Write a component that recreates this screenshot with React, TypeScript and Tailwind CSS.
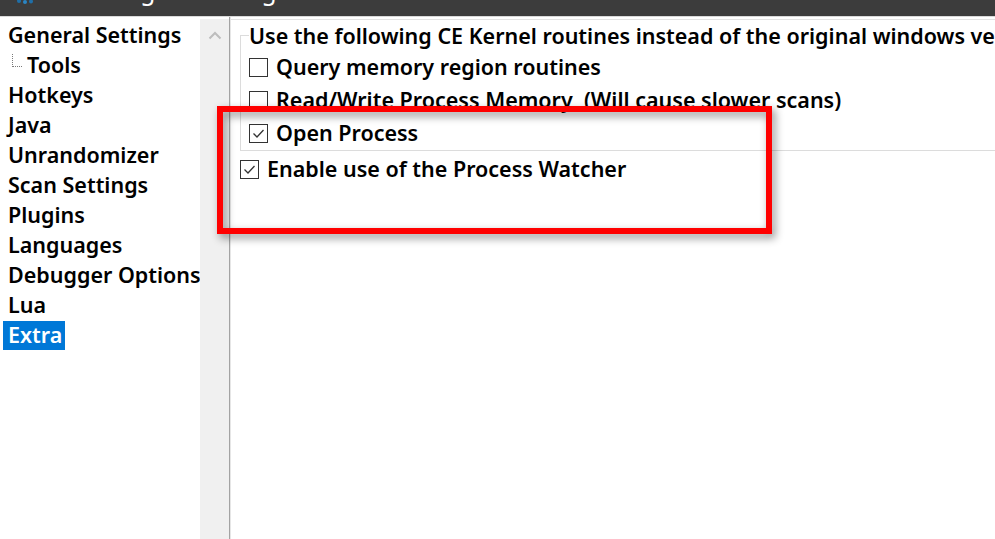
import React from 'react';

const TREE = [
  'General Settings',
  'Tools',
  'Hotkeys',
  'Java',
  'Unrandomizer',
  'Scan Settings',
  'Plugins',
  'Languages',
  'Debugger Options',
  'Lua',
  'Extra',
];

const KERNEL_OPTIONS = [
  { label: 'Query memory region routines', checked: false },
  { label: 'Read/Write Process Memory  (Will cause slower scans)', checked: false },
  { label: 'Open Process', checked: true },
];

function CheckBox({ checked }: { checked: boolean }) {
  return (
    <span className="flex h-[19px] w-[19px] shrink-0 items-center justify-center border border-[#333333] bg-white">
      {checked && (
        <svg width="13" height="11" viewBox="0 0 13 11">
          <path d="M1.5 5.5 L5 9 L11.5 2" fill="none" stroke="#333333" strokeWidth="1.3" />
        </svg>
      )}
    </span>
  );
}

function CheckRow({ label, checked }: { label: string; checked: boolean }) {
  return (
    <div className="flex h-[33px] items-center gap-[8px] whitespace-pre">
      <CheckBox checked={checked} />
      <span>{label}</span>
    </div>
  );
}

export default function App() {
  return (
    <div
      className="relative h-[539px] w-[995px] overflow-hidden bg-white text-[21.5px] font-semibold text-black"
      style={{ fontFamily: '"Noto Sans", "Open Sans", sans-serif' }}
    >
      {/* title bar, only the bottom edge is visible */}
      <div className="relative h-[16px] overflow-hidden bg-[#3c3c3c]">
        <svg className="absolute left-[15px] top-0" width="22" height="5" viewBox="0 0 22 5">
          <circle cx="4" cy="1" r="2" fill="#1f6fa8" />
          <circle cx="10" cy="2" r="2" fill="#2a86c4" />
          <circle cx="16" cy="1.5" r="2" fill="#1f6fa8" />
        </svg>
        <div className="absolute left-[38px] top-[-27px] whitespace-nowrap text-[24.5px] font-normal text-white">
          Cheat Engine settings
        </div>
      </div>

      <div className="flex h-[523px] border-t border-[#dadada]">
        {/* tree */}
        <div className="flex w-[231px] shrink-0">
          <div className="w-[200px] pt-[3px]">
            {TREE.map((item) => {
              if (item === 'Tools') {
                return (
                  <div key={item} className="flex h-[30px] items-center">
                    <span className="ml-[12px] mb-[10px] h-[13px] w-[10px] border-b border-l border-dotted border-[#7a7a7a]" />
                    <span className="ml-[5px] leading-none">{item}</span>
                  </div>
                );
              }
              if (item === 'Extra') {
                return (
                  <div key={item} className="flex h-[30px] items-center">
                    <span className="ml-[3px] flex h-[29px] items-center bg-[#0078d7] pl-[5px] pr-[3px] text-white">
                      {item}
                    </span>
                  </div>
                );
              }
              return (
                <div key={item} className="flex h-[30px] items-center whitespace-nowrap pl-[8px]">
                  {item}
                </div>
              );
            })}
          </div>
          <div className="mt-[2px] flex w-[29px] justify-center bg-[#f0f0f0] pt-[12px]">
            <svg width="14" height="9" viewBox="0 0 14 9">
              <path d="M1.5 7.5 L7 2 L12.5 7.5" fill="none" stroke="#bdbdbd" strokeWidth="2" />
            </svg>
          </div>
          <div className="w-[1px] bg-[#a3a3a3]" />
          <div className="w-[1px] bg-[#e6e6e6]" />
        </div>

        {/* settings page */}
        <div className="mt-[2px] min-w-0 flex-1 border-t border-[#e3e3e3] pl-[9px]">
          <fieldset className="mt-[4px] w-[900px] border border-[#dcdcdc] pl-[8px]">
            <legend className="whitespace-nowrap leading-[23px]">
              Use the following CE Kernel routines instead of the original windows versions
            </legend>
            <div className="mt-[4px]">
              {KERNEL_OPTIONS.map((o) => (
                <CheckRow key={o.label} label={o.label} checked={o.checked} />
              ))}
            </div>
          </fieldset>
          <div className="mt-[2px]">
            <CheckRow label="Enable use of the Process Watcher" checked={true} />
          </div>
        </div>
      </div>

      {/* red annotation frame */}
      <div className="absolute left-[217px] top-[106px] h-[128px] w-[555px] border-[6px] border-[#ff0000] drop-shadow-[3px_4px_4px_rgba(0,0,0,0.45)]" />
    </div>
  );
}
